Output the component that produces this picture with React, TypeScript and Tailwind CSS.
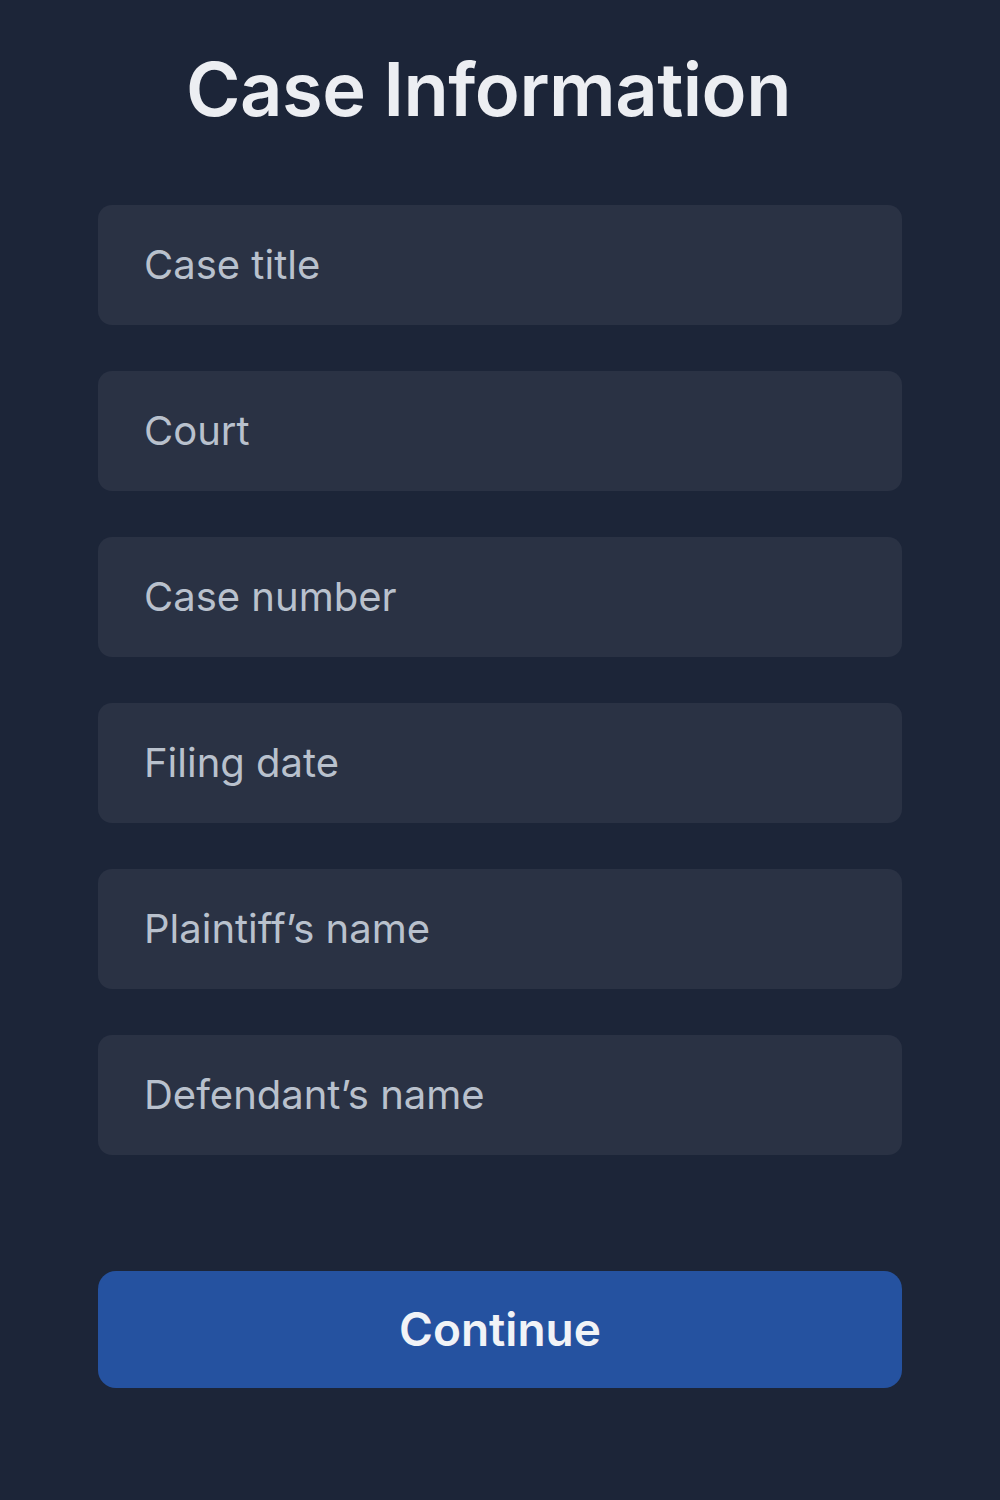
import React from "react";

const fields = [
  "Case title",
  "Court",
  "Case number",
  "Filing date",
  "Plaintiff\u2019s name",
  "Defendant\u2019s name",
];

export default function App() {
  return (
    <div
      className="w-[1000px] h-[1500px] bg-[#1c2538] flex flex-col items-center"
      style={{ fontFamily: "Inter, 'Noto Sans', sans-serif" }}
    >
      <h1 className="mt-[44px] mr-[23px] h-[90px] flex items-center text-[74px] font-semibold text-[#eceef2] tracking-[-0.5px] leading-none">
        Case Information
      </h1>
      <div className="mt-[71px] w-[804px] flex flex-col gap-[46px]">
        {fields.map((f) => (
          <div
            key={f}
            className="h-[120px] rounded-[14px] bg-[#2a3244] flex items-center pl-[46px] text-[40px] text-[#b9c1cd]"
          >
            {f}
          </div>
        ))}
      </div>
      <button className="mt-[116px] w-[804px] h-[117px] rounded-[18px] bg-[#2552a0] text-[46px] font-semibold text-[#f1f3f7] flex items-center justify-center">
        Continue
      </button>
    </div>
  );
}
